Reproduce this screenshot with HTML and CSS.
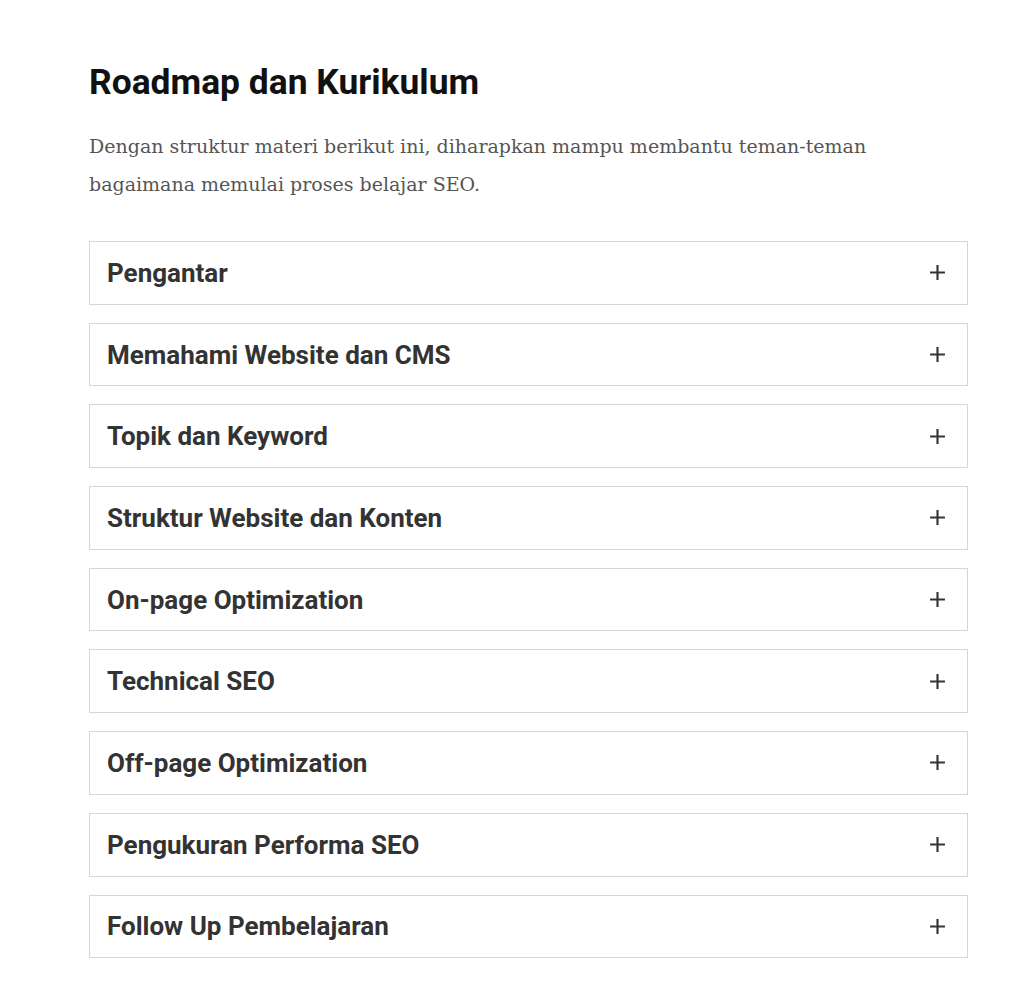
FILE: index.html
```html
<!DOCTYPE html>
<html lang="id">
<head>
<meta charset="utf-8">
<title>Roadmap dan Kurikulum</title>
<link rel="stylesheet" href="styles.css">
</head>
<body>
<main class="section">
  <h2 class="title">Roadmap dan Kurikulum</h2>
  <p class="intro">Dengan struktur materi berikut ini, diharapkan mampu membantu teman-teman bagaimana memulai proses belajar SEO.</p>
  <div class="accordion">
    <div class="item"><span class="label">Pengantar</span><svg class="plus" viewBox="0 0 16 16"><path d="M8 1v14M1 8h14"/></svg></div>
    <div class="item"><span class="label">Memahami Website dan CMS</span><svg class="plus" viewBox="0 0 16 16"><path d="M8 1v14M1 8h14"/></svg></div>
    <div class="item"><span class="label">Topik dan Keyword</span><svg class="plus" viewBox="0 0 16 16"><path d="M8 1v14M1 8h14"/></svg></div>
    <div class="item"><span class="label">Struktur Website dan Konten</span><svg class="plus" viewBox="0 0 16 16"><path d="M8 1v14M1 8h14"/></svg></div>
    <div class="item"><span class="label">On-page Optimization</span><svg class="plus" viewBox="0 0 16 16"><path d="M8 1v14M1 8h14"/></svg></div>
    <div class="item"><span class="label">Technical SEO</span><svg class="plus" viewBox="0 0 16 16"><path d="M8 1v14M1 8h14"/></svg></div>
    <div class="item"><span class="label">Off-page Optimization</span><svg class="plus" viewBox="0 0 16 16"><path d="M8 1v14M1 8h14"/></svg></div>
    <div class="item"><span class="label">Pengukuran Performa SEO</span><svg class="plus" viewBox="0 0 16 16"><path d="M8 1v14M1 8h14"/></svg></div>
    <div class="item"><span class="label">Follow Up Pembelajaran</span><svg class="plus" viewBox="0 0 16 16"><path d="M8 1v14M1 8h14"/></svg></div>
  </div>
</main>
</body>
</html>
```
FILE: styles.css
```css
html, body {
  margin: 0;
  padding: 0;
  background: #fff;
}
.section {
  width: 879px;
  padding: 62px 0 0 89px;
}
.title {
  margin: 0;
  font-family: Roboto, "Liberation Sans", sans-serif;
  font-weight: 700;
  font-size: 35.4px;
  line-height: 40px;
  color: #111;
}
.intro {
  margin: 25px 0 0;
  font-family: "DejaVu Serif", "Liberation Serif", serif;
  font-size: 19px;
  line-height: 38px;
  color: #555;
}
.accordion {
  margin-top: 38px;
  display: flex;
  flex-direction: column;
  gap: 18px;
}
.item {
  box-sizing: border-box;
  height: 63.7px;
  border: 1px solid #d6d6d6;
  display: flex;
  align-items: center;
  justify-content: space-between;
  padding: 0 21px 0 17px;
}
.label {
  font-family: Roboto, "Liberation Sans", sans-serif;
  font-weight: 700;
  font-size: 26px;
  color: #333;
}
.plus {
  width: 17px;
  height: 17px;
  stroke: #333;
  stroke-width: 2;
  fill: none;
}
```
